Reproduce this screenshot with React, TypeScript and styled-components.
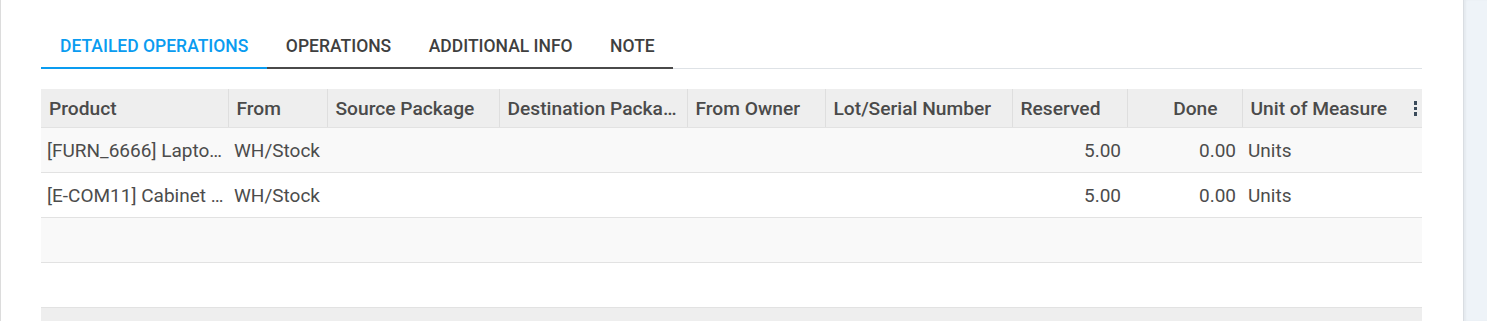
import styled, { createGlobalStyle } from "styled-components";

const GlobalStyle = createGlobalStyle`
  html, body {
    margin: 0;
    padding: 0;
    background: #ffffff;
  }
  body {
    font-family: Roboto, "Noto Sans", sans-serif;
    color: #4c4c4c;
  }
`;

type Column = {
  label: string;
  width: number;
  align?: "left" | "right";
};

const columns: Column[] = [
  { label: "Product", width: 187 },
  { label: "From", width: 99 },
  { label: "Source Package", width: 172 },
  { label: "Destination Package", width: 188 },
  { label: "From Owner", width: 138 },
  { label: "Lot/Serial Number", width: 187 },
  { label: "Reserved", width: 115 },
  { label: "Done", width: 115, align: "right" },
  { label: "Unit of Measure", width: 180 },
];

const rows = [
  ["[FURN_6666] Laptop Stand", "WH/Stock", "", "", "", "", "5.00", "0.00", "Units"],
  ["[E-COM11] Cabinet with Doors", "WH/Stock", "", "", "", "", "5.00", "0.00", "Units"],
];

const tabs = ["DETAILED OPERATIONS", "OPERATIONS", "ADDITIONAL INFO", "NOTE"];

export default function App() {
  return (
    <>
      <GlobalStyle />
      <Layout>
        <Sheet>
          <TabBar>
            {tabs.map((t, i) => (
              <Tab key={t} $active={i === 0}>
                {t}
              </Tab>
            ))}
          </TabBar>

          <Table>
            <colgroup>
              {columns.map((c) => (
                <col key={c.label} style={{ width: c.width }} />
              ))}
            </colgroup>
            <thead>
              <tr>
                {columns.map((c, i) => (
                  <Th key={c.label} $align={c.align}>
                    {c.label}
                    {i === columns.length - 1 && (
                      <Kebab>
                        <span />
                        <span />
                        <span />
                      </Kebab>
                    )}
                  </Th>
                ))}
              </tr>
            </thead>
            <tbody>
              {rows.map((r, ri) => (
                <Row key={ri} $striped={ri % 2 === 0}>
                  {r.map((v, ci) => (
                    <Td key={ci} $numeric={ci === 6 || ci === 7}>
                      {v}
                    </Td>
                  ))}
                </Row>
              ))}
              <Row $striped>
                <Td colSpan={9} />
              </Row>
              <Row $striped={false}>
                <Td colSpan={9} />
              </Row>
            </tbody>
            <tfoot>
              <tr>
                <Foot colSpan={9} />
              </tr>
            </tfoot>
          </Table>
        </Sheet>
        <SidePanel />
      </Layout>
    </>
  );
}

const Layout = styled.div`
  display: flex;
  height: 321px;
  overflow: hidden;
`;

const Sheet = styled.div`
  flex: 0 0 1463px;
  box-sizing: border-box;
  border-left: 1px solid #dcdcdc;
  padding: 28px 41px 0 40px;
  background: #ffffff;
`;

const SidePanel = styled.div`
  flex: 1;
  background: #eef3f8;
  border-left: 1px solid #d9dde2;
  box-shadow: inset 2px 0 2px rgba(0, 0, 0, 0.04);
`;

const TabBar = styled.div`
  display: flex;
  border-bottom: 1px solid #dee2e6;
`;

const Tab = styled.div<{ $active: boolean }>`
  padding: 8px 18.5px 11px 19px;
  font-size: 17.5px;
  line-height: 20px;
  font-weight: 500;
  color: ${({ $active }) => ($active ? "#0a9cf0" : "#3f3f3f")};
  border-bottom: 2px solid ${({ $active }) => ($active ? "#0a9cf0" : "#4a4a4a")};
  margin-bottom: -1px;
  white-space: nowrap;
`;

const Table = styled.table`
  width: 1381px;
  margin-top: 20px;
  border-collapse: collapse;
  table-layout: fixed;
  font-size: 19px;
`;

const Th = styled.th<{ $align?: "left" | "right" }>`
  position: relative;
  height: 38px;
  padding: 0 ${({ $align }) => ($align === "right" ? "24px" : "7px")} 0 8px;
  background: #eeeeee;
  border-left: 1px solid #dedede;
  border-bottom: 1px solid #e2e2e2;
  text-align: ${({ $align }) => $align ?? "left"};
  font-size: 19.2px;
  font-weight: 500;
  color: #4a4a4a;
  white-space: nowrap;
  overflow: hidden;
  text-overflow: ellipsis;

  &:first-child {
    border-left: none;
  }
`;

const Kebab = styled.span`
  position: absolute;
  right: 5px;
  top: 12px;
  display: flex;
  flex-direction: column;
  gap: 2px;

  span {
    width: 3px;
    height: 3.5px;
    background: #3a4a5a;
  }
`;

const Row = styled.tr<{ $striped: boolean }>`
  height: 45px;
  background: ${({ $striped }) => ($striped ? "#f9f9f9" : "#ffffff")};
  border-bottom: 1px solid #e2e2e2;
`;

const Td = styled.td<{ $numeric?: boolean }>`
  padding: 0 ${({ $numeric }) => ($numeric ? "6px" : "4px")} 0 6px;
  text-align: ${({ $numeric }) => ($numeric ? "right" : "left")};
  white-space: nowrap;
  overflow: hidden;
  text-overflow: ellipsis;
  color: #4c4c4c;
`;

const Foot = styled.td`
  height: 14px;
  padding: 0;
  background: #eeeeee;
`;
